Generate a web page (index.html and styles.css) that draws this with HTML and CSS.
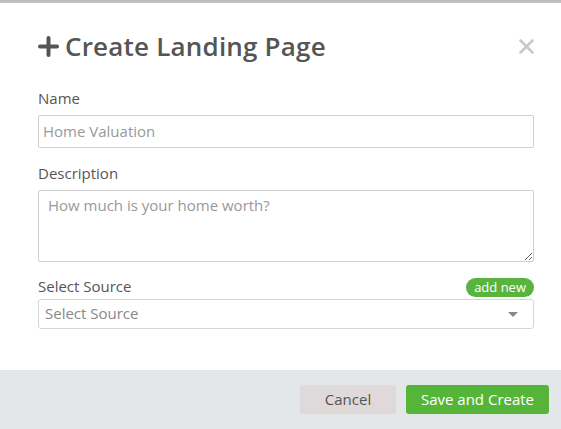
FILE: index.html
```html
<!DOCTYPE html>
<html>
<head>
<meta charset="utf-8">
<link rel="stylesheet" href="styles.css">
</head>
<body>
<div class="topstrip"></div>
<div class="modal">
  <div class="modal-body">
    <div class="header">
      <h1 class="title">
        <svg class="plus" width="21" height="21" viewBox="0 0 21 21"><path d="M10.5 2v17M2 10.5h17" stroke="#555" stroke-width="4" stroke-linecap="round"/></svg>
        <span>Create Landing Page</span>
      </h1>
      <svg class="close" width="15" height="15" viewBox="0 0 15 15"><path d="M1.5 1.5l12 12M13.5 1.5l-12 12" stroke="#c9c9c9" stroke-width="2.6" stroke-linecap="round"/></svg>
    </div>
    <div class="field">
      <label class="label">Name</label>
      <input class="input" type="text" placeholder="Home Valuation">
    </div>
    <div class="field">
      <label class="label">Description</label>
      <textarea class="textarea" placeholder="How much is your home worth?"></textarea>
    </div>
    <div class="field field-select">
      <div class="label-row">
        <label class="label">Select Source</label>
        <span class="badge">add new</span>
      </div>
      <div class="select">
        <span>Select Source</span>
        <svg width="10" height="5" viewBox="0 0 10 5"><path d="M0 0h10L5 5z" fill="#888"/></svg>
      </div>
    </div>
  </div>
  <div class="footer">
    <button class="btn btn-cancel">Cancel</button>
    <button class="btn btn-save">Save and Create</button>
  </div>
</div>
</body>
</html>
```
FILE: styles.css
```css
* { box-sizing: border-box; }
html, body { margin: 0; padding: 0; background: #fff; }
body {
  font-family: "Open Sans", "Noto Sans", sans-serif;
  color: #555;
  width: 561px;
  height: 429px;
  overflow: hidden;
  display: flex;
  flex-direction: column;
}
.topstrip {
  height: 3px;
  background: #bdbdbd;
  border-bottom: 1px solid #c8c8c8;
  flex: none;
}
.modal {
  flex: 1;
  display: flex;
  flex-direction: column;
}
.modal-body {
  flex: 1;
  padding: 26px 27px 0 38px;
}
.header {
  display: flex;
  align-items: center;
  justify-content: space-between;
  height: 34px;
  margin-bottom: 26px;
}
.title {
  margin: 0;
  display: flex;
  align-items: center;
  gap: 6px;
  font-size: 26px;
  font-weight: 600;
  color: #555;
  letter-spacing: 0.2px;
}
.plus { flex: none; }
.close { margin-top: 1px; }
.field { display: flex; flex-direction: column; }
.label {
  font-size: 15px;
  color: #555;
  line-height: 18px;
  margin-bottom: 8px;
}
.input {
  height: 33px;
  border: 1px solid #d0d0d0;
  border-radius: 2px;
  padding: 0 4px 1px;
  font-family: inherit;
  font-size: 15px;
  color: #555;
  margin-bottom: 16px;
  outline: none;
}
.textarea {
  height: 72px;
  border: 1px solid #d0d0d0;
  border-radius: 2px;
  padding: 4px 9px;
  font-family: inherit;
  font-size: 15px;
  color: #555;
  margin-bottom: 16px;
  outline: none;
}
.input::placeholder, .textarea::placeholder { color: #999; opacity: 1; }
.label-row {
  display: flex;
  justify-content: space-between;
  align-items: flex-start;
  height: 21px;
}
.label-row .label { margin: -1px 0 0; }
.badge {
  background: #58b43c;
  color: #fff;
  font-size: 13px;
  line-height: 19px;
  height: 19px;
  padding: 0 8px;
  border-radius: 10px;
}
.select {
  height: 30px;
  border: 1px solid #d6d6d6;
  border-radius: 3px;
  display: flex;
  align-items: center;
  justify-content: space-between;
  padding: 0 15px 2px 6px;
  font-size: 15px;
  color: #888;
}
.select svg { margin-top: 2px; }
.footer {
  flex: none;
  height: 59px;
  background: #e3e7ea;
  display: flex;
  justify-content: flex-end;
  align-items: center;
  gap: 10px;
  padding: 0 12px 0 0;
}
.btn {
  height: 29px;
  border: none;
  border-radius: 3px;
  font-family: inherit;
  font-size: 15px;
  padding: 0 0 1px;
}
.btn-cancel {
  width: 96px;
  background: #e0d9d9;
  color: #555;
}
.btn-save {
  width: 143px;
  background: #55b539;
  color: #fff;
}
```
